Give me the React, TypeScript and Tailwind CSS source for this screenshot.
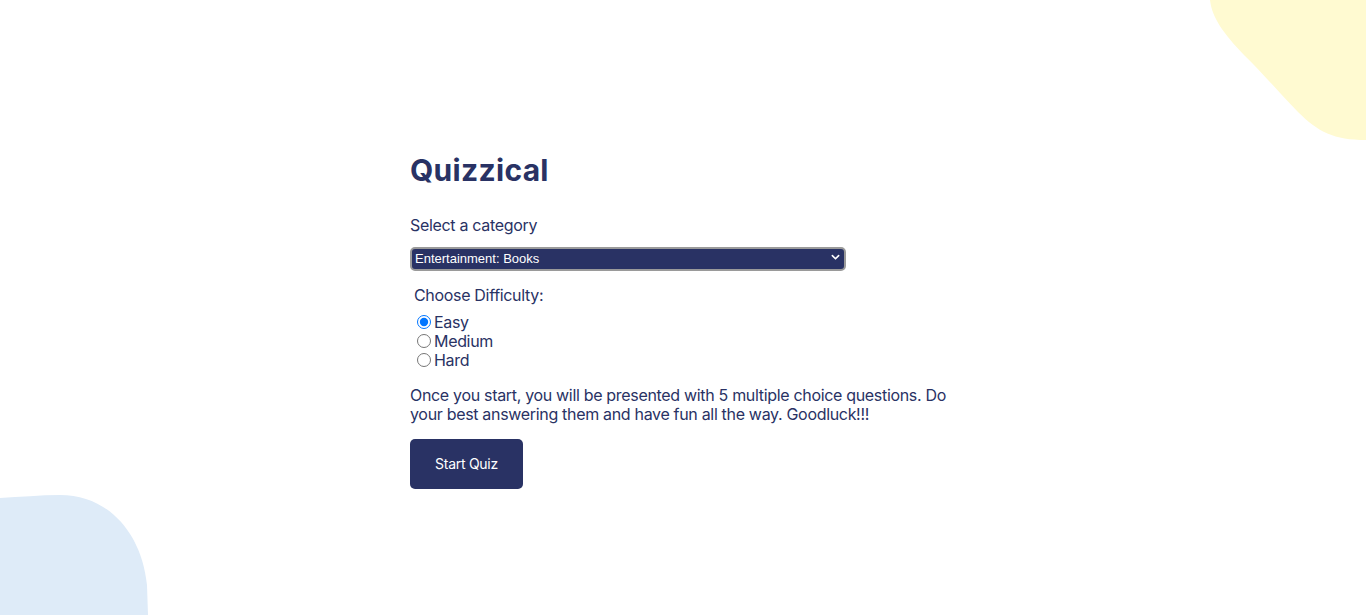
import React, { useState } from "react";

const categories = [
  "General Knowledge",
  "Entertainment: Books",
  "Entertainment: Film",
  "Entertainment: Music",
  "Science & Nature",
];

export default function App() {
  const [category, setCategory] = useState("Entertainment: Books");
  const [difficulty, setDifficulty] = useState("easy");

  return (
    <main className="relative h-[615px] w-full overflow-hidden bg-white font-['Inter',sans-serif] text-[#293264]">
      {/* decorative blobs */}
      <svg className="absolute right-0 top-0 w-[156px] h-[142px]" viewBox="0 0 156 142" fill="#FFFAD1">
        <path d="M0 0 L156 0 L156 140 C124 140 108 132 88 112 C68 92 52 72 34 55 C14 34 2 18 0 0 Z" />
      </svg>
      <svg className="absolute left-0 bottom-0 w-[150px] h-[120px]" viewBox="0 0 150 120" fill="#DEEBF8">
        <path d="M0 3 C20 2 40 0 60 0 C110 0 142 40 147 90 L148 120 L0 120 Z" />
      </svg>

      <div className="relative mx-auto w-[546px] pt-[150px]">
        <h1 className="text-[30px] font-bold leading-[40px] tracking-[0.01em]">Quizzical</h1>

        <p className="mt-[24px] text-[16px] leading-[22px] tracking-[-0.02em]">Select a category</p>

        <div className="relative mt-[9px] w-[436px]">
          <select
            value={category}
            onChange={(e) => setCategory(e.target.value)}
            className="h-[24px] w-full appearance-none rounded-[5px] border-2 border-[#9a9a9a] bg-[#293264] pl-[3px] font-['Liberation_Sans',sans-serif] text-[13px] font-medium text-white outline-none"
          >
            {categories.map((c) => (
              <option key={c}>{c}</option>
            ))}
          </select>
          <svg className="pointer-events-none absolute right-[6px] top-[8px] w-[9px] h-[8px]" viewBox="0 0 10 8" fill="none" stroke="white" strokeWidth={1.8} strokeLinecap="round" strokeLinejoin="round">
            <path d="M1.5 2.5 L5 6 L8.5 2.5" />
          </svg>
        </div>

        <div className="ml-[4px] mt-[13px]">
          <p className="text-[16px] leading-[22px] tracking-[-0.02em]">Choose Difficulty:</p>
          <div className="mt-[7px] flex flex-col">
            {["Easy", "Medium", "Hard"].map((d) => (
              <label key={d} className="flex h-[19px] items-center gap-[3px] text-[16px] tracking-[-0.02em]">
                <input
                  type="radio"
                  name="difficulty"
                  className="m-0 ml-[3px] h-[14px] w-[14px]"
                  checked={difficulty === d.toLowerCase()}
                  onChange={() => setDifficulty(d.toLowerCase())}
                />
                {d}
              </label>
            ))}
          </div>
        </div>

        <p className="mt-[16px] text-[16px] leading-[19px] tracking-[-0.02em]">
          Once you start, you will be presented with 5 multiple choice questions. Do your best answering them and have fun all the way. Goodluck!!!
        </p>

        <button className="mt-[15px] h-[50px] w-[113px] rounded-[5px] bg-[#293264] text-[14px] text-white tracking-[-0.02em]">
          Start Quiz
        </button>
      </div>
    </main>
  );
}
